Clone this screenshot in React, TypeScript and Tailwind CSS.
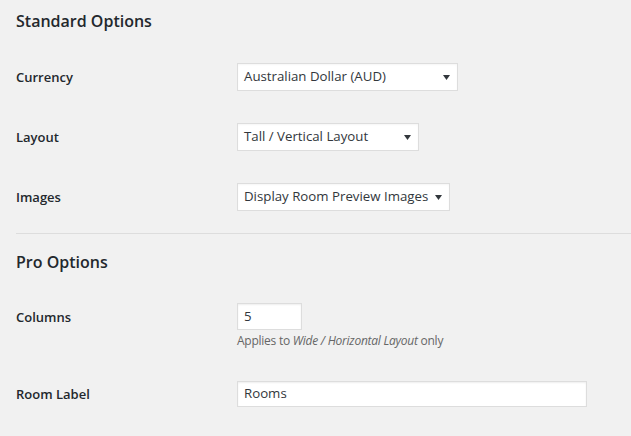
const font = "font-['Open_Sans','Noto_Sans',sans-serif]";

function Caret() {
  return (
    <svg width="7" height="5" viewBox="0 0 7 5" className="shrink-0">
      <path d="M0 0h7L3.5 5z" fill="#32373c" />
    </svg>
  );
}

function FakeSelect({ value, width }: { value: string; width: string }) {
  return (
    <div
      className={`flex h-[28px] items-center justify-between border border-[#ddd] bg-white pl-[6px] pr-[7px] text-[13.25px] text-[#32373c] shadow-[inset_0_1px_2px_rgba(0,0,0,0.04)] ${width}`}
    >
      <span className="whitespace-nowrap">{value}</span>
      <Caret />
    </div>
  );
}

function TextBox({ value, width, height }: { value: string; width: string; height: string }) {
  return (
    <div
      className={`flex items-center border border-[#ddd] bg-white px-[6px] text-[13.25px] text-[#32373c] shadow-[inset_0_1px_2px_rgba(0,0,0,0.07)] ${width} ${height}`}
    >
      {value}
    </div>
  );
}

function Row({ label, children }: { label: string; children: React.ReactNode }) {
  return (
    <div className="flex h-[60px] items-center">
      <div className="w-[221px] pt-[2px] text-[13px] font-semibold">{label}</div>
      {children}
    </div>
  );
}

export default function App() {
  return (
    <div className={`h-[436px] overflow-hidden bg-[#f1f1f1] pl-4 text-[#23282d] ${font}`}>
      <h2 className="pt-[9px] text-[16px] font-semibold leading-[24px]">Standard Options</h2>

      <div className="mt-[14px]">
        <Row label="Currency">
          <FakeSelect value="Australian Dollar (AUD)" width="w-[221px]" />
        </Row>
        <Row label="Layout">
          <FakeSelect value="Tall / Vertical Layout" width="w-[182px]" />
        </Row>
        <Row label="Images">
          <FakeSelect value="Display Room Preview Images" width="w-[213px]" />
        </Row>
      </div>

      <hr className="mt-[6px] border-t border-[#ddd]" />

      <h2 className="mt-[16px] text-[16px] font-semibold leading-[24px]">Pro Options</h2>

      <div className="mt-[29px] flex">
        <div className="flex h-[27px] w-[221px] items-center pt-[2px] text-[13px] font-semibold">Columns</div>
        <div>
          <TextBox value="5" width="w-[65px]" height="h-[27px]" />
          <p className="mt-[2px] text-[12px] leading-[18px] tracking-[-0.25px] text-[#666]">
            Applies to <em>Wide / Horizontal Layout</em> only
          </p>
        </div>
      </div>

      <div className="mt-[31px] flex">
        <div className="flex h-[26px] w-[221px] items-center pt-[2px] text-[13px] font-semibold">Room Label</div>
        <TextBox value="Rooms" width="w-[350px]" height="h-[26px]" />
      </div>
    </div>
  );
}
